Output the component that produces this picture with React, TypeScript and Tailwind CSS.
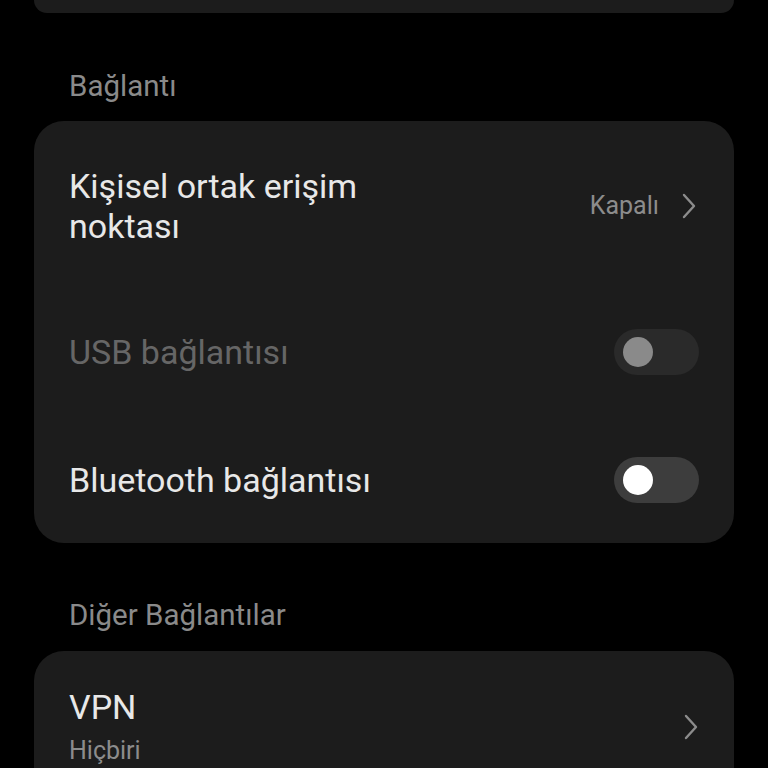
import type { ReactNode } from 'react';

function ChevronRight() {
  return (
    <svg width="16" height="26" viewBox="0 0 16 26" fill="none" className="text-[#8c8c8c]">
      <path d="M3 2l10 11L3 24" stroke="currentColor" strokeWidth={2.4} strokeLinecap="round" strokeLinejoin="round" />
    </svg>
  );
}

function Toggle({ disabled = false }: { disabled?: boolean }) {
  return (
    <div
      className={`w-[85px] h-[46px] rounded-full flex items-center px-[9px] ${
        disabled ? 'bg-[#2a2a2a]' : 'bg-[#3d3d3d]'
      }`}
    >
      <div className={`w-[30px] h-[30px] rounded-full ${disabled ? 'bg-[#8a8a8a]' : 'bg-white'}`} />
    </div>
  );
}

function SectionTitle({ children }: { children: ReactNode }) {
  return <div className="px-[69px] text-[29.5px] leading-[36px] text-[#8a8a8a]">{children}</div>;
}

function Card({ children, className = '' }: { children: ReactNode; className?: string }) {
  return <div className={`mx-[34px] bg-[#1c1c1c] rounded-[30px] ${className}`}>{children}</div>;
}

export default function App() {
  return (
    <div className="w-[768px] h-[768px] bg-black overflow-hidden" style={{ fontFamily: 'Roboto, "Noto Sans", sans-serif' }}>
      <Card className="h-[13px] rounded-t-none" />

      <div className="pt-[55px] pb-[17px]">
        <SectionTitle>Bağlantı</SectionTitle>
      </div>

      <Card className="pt-[45px] pb-[40px]">
        <div className="flex items-center justify-between pl-[35px] pr-[37px]">
          <div className="text-[34px] leading-[40px] text-[#e8e8e8] w-[340px]">Kişisel ortak erişim noktası</div>
          <div className="flex items-center gap-[22px]">
            <span className="text-[25px] text-[#8c8c8c]">Kapalı</span>
            <ChevronRight />
          </div>
        </div>

        <div className="flex items-center justify-between pl-[35px] pr-[35px] mt-[83px]">
          <div className="text-[34px] leading-[40px] text-[#666666]">USB bağlantısı</div>
          <Toggle disabled />
        </div>

        <div className="flex items-center justify-between pl-[35px] pr-[35px] mt-[82px]">
          <div className="text-[34px] leading-[40px] text-[#e8e8e8]">Bluetooth bağlantısı</div>
          <Toggle />
        </div>
      </Card>

      <div className="pt-[54px] pb-[18px]">
        <SectionTitle>Diğer Bağlantılar</SectionTitle>
      </div>

      <Card className="pt-[36px] pb-[30px]">
        <div className="flex items-center justify-between pl-[35px] pr-[35px]">
          <div>
            <div className="text-[34px] leading-[40px] text-[#e8e8e8]">VPN</div>
            <div className="text-[25px] leading-[32px] text-[#8c8c8c] mt-[8px]">Hiçbiri</div>
          </div>
          <ChevronRight />
        </div>
      </Card>
    </div>
  );
}
